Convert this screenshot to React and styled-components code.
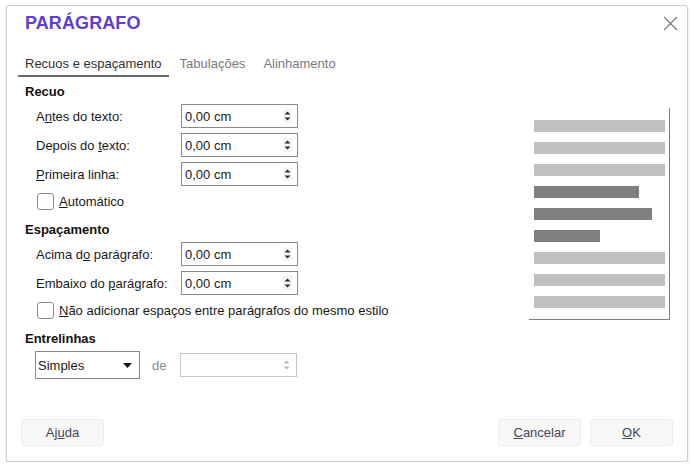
import React from "react";
import styled, { createGlobalStyle } from "styled-components";

const Global = createGlobalStyle`
  html, body { margin: 0; padding: 0; background: #ffffff; }
  body { font-family: "Liberation Sans", Arial, sans-serif; font-size: 13px; color: #1a1a1a; }
  * { box-sizing: border-box; }
`;

const Dialog = styled.div`
  margin: 5px 0 0 6px;
  width: 682px;
  height: 457px;
  border: 1px solid #cfcfd4;
  border-radius: 3px;
  box-shadow: 0 1px 2px rgba(0, 0, 0, 0.18);
  display: flex;
  flex-direction: column;
  position: relative;
  background: #fff;
`;

const Header = styled.div`
  display: flex;
  justify-content: space-between;
  align-items: center;
  padding: 3px 8px 0 18px;
  height: 31px;
`;

const Title = styled.h1`
  margin: 0;
  font-size: 18px;
  font-weight: bold;
  color: #5d3fd3;
  letter-spacing: 0.1px;
`;

const CloseBtn = styled.button`
  width: 18px;
  height: 18px;
  padding: 0;
  border: none;
  background: none;
  display: flex;
  align-items: center;
  justify-content: center;
`;

const Tabs = styled.div`
  display: flex;
  gap: 4px;
  margin: 16px 0 0 11px;
`;

const Tab = styled.div`
  padding: 3px 7px 4px;
  font-size: 13px;
  color: ${(p) => (p.$active ? "#333" : "#7a7a7a")};
  border-bottom: 2px solid ${(p) => (p.$active ? "#6b6b6b" : "transparent")};
`;

const Body = styled.div`
  display: flex;
  flex: 1;
  padding: 0 17px 0 18px;
`;

const Form = styled.div`
  flex: 1;
  display: flex;
  flex-direction: column;
`;

const SectionTitle = styled.div`
  font-weight: bold;
  font-size: 13px;
  color: #111;
  height: 18px;
  line-height: 18px;
  margin-top: ${(p) => p.$top}px;
`;

const Row = styled.div`
  display: flex;
  align-items: center;
  margin-top: ${(p) => p.$top}px;
  padding-left: ${(p) => p.$indent}px;
`;

const Label = styled.label`
  width: 145px;
  font-size: 13px;
  color: #1a1a1a;
`;

const U = styled.span`
  text-decoration: underline;
  text-underline-offset: 1px;
`;

const Spin = styled.div`
  width: 117px;
  height: 24px;
  border: 1px solid ${(p) => (p.$disabled ? "#c6c6c6" : "#8a8a8a")};
  display: flex;
  align-items: center;
  justify-content: space-between;
  padding: 0 5px 0 3px;
  font-size: 13px;
  color: #1a1a1a;
  background: #fff;
`;

const SpinArrows = styled.div`
  width: 9px;
  height: 14px;
  display: flex;
  align-items: center;
  justify-content: center;
  background: ${(p) => (p.$disabled ? "transparent" : "#f4f4f4")};
`;

const Check = styled.span`
  width: 17px;
  height: 17px;
  border: 1px solid #8a8a8a;
  border-radius: 3px;
  background: #fff;
  margin-right: 5px;
  flex: none;
`;

const CheckText = styled.span`
  font-size: 13px;
  color: #1a1a1a;
`;

const Select = styled.div`
  width: 105px;
  height: 28px;
  border: 1px solid #8a8a8a;
  display: flex;
  align-items: center;
  justify-content: space-between;
  padding: 0 7px 0 2px;
  font-size: 13px;
  color: #1a1a1a;
`;

const De = styled.span`
  width: 40px;
  padding-left: 12px;
  color: #8a8a8a;
  font-size: 13px;
`;

const Preview = styled.div`
  width: 141px;
  height: 212px;
  margin-top: 31px;
  border-right: 1px solid #808080;
  border-bottom: 1px solid #808080;
  padding: 12px 0 0 5px;
  display: flex;
  flex-direction: column;
  gap: 10px;
`;

const Bar = styled.div`
  height: 12px;
  background: ${(p) => (p.$dark ? "#808080" : "#c0c0c0")};
`;

const Footer = styled.div`
  display: flex;
  align-items: center;
  padding: 0 14px 15px 14px;
  gap: 9px;
`;

const Spacer = styled.div`
  flex: 1;
`;

const Button = styled.button`
  width: 83px;
  height: 27px;
  border: 1px solid #ececee;
  border-radius: 3px;
  background: #f8f8f9;
  font-family: "Liberation Sans", Arial, sans-serif;
  font-size: 13px;
  color: #454555;
  padding: 0;
`;

const ArrowsIcon = ({ color }) => (
  <svg width="7" height="10" viewBox="0 0 7 10">
    <path d="M0.5 3.5 L3.5 0.5 L6.5 3.5 Z" fill={color} />
    <path d="M0.5 6.5 L3.5 9.5 L6.5 6.5 Z" fill={color} />
  </svg>
);

const SpinBox = ({ disabled, value }) => (
  <Spin $disabled={disabled}>
    <span>{value}</span>
    <SpinArrows $disabled={disabled}>
      <ArrowsIcon color={disabled ? "#b8b8b8" : "#2a2a2a"} />
    </SpinArrows>
  </Spin>
);

const bars = [
  { w: 131 }, { w: 131 }, { w: 131 },
  { w: 105, dark: true }, { w: 118, dark: true }, { w: 66, dark: true },
  { w: 131 }, { w: 131 }, { w: 131 },
];

export default function App() {
  return (
    <>
      <Global />
      <Dialog>
        <Header>
          <Title>PARÁGRAFO</Title>
          <CloseBtn aria-label="Fechar">
            <svg width="15" height="15" viewBox="0 0 15 15">
              <path d="M1 1 L14 14 M14 1 L1 14" stroke="#7a7a7a" strokeWidth="1.2" />
            </svg>
          </CloseBtn>
        </Header>
        <Tabs>
          <Tab $active>Recuos e espaçamento</Tab>
          <Tab>Tabulações</Tab>
          <Tab>Alinhamento</Tab>
        </Tabs>
        <Body>
          <Form>
            <SectionTitle $top={6}>Recuo</SectionTitle>
            <Row $top={3} $indent={11}>
              <Label>A<U>n</U>tes do texto:</Label>
              <SpinBox value="0,00 cm" />
            </Row>
            <Row $top={5} $indent={11}>
              <Label>Depois do <U>t</U>exto:</Label>
              <SpinBox value="0,00 cm" />
            </Row>
            <Row $top={5} $indent={11}>
              <Label><U>P</U>rimeira linha:</Label>
              <SpinBox value="0,00 cm" />
            </Row>
            <Row $top={7} $indent={12}>
              <Check />
              <CheckText><U>A</U>utomático</CheckText>
            </Row>
            <SectionTitle $top={11}>Espaçamento</SectionTitle>
            <Row $top={3} $indent={11}>
              <Label>Acima d<U>o</U> parágrafo:</Label>
              <SpinBox value="0,00 cm" />
            </Row>
            <Row $top={5} $indent={11}>
              <Label>Embaixo do <U>p</U>arágrafo:</Label>
              <SpinBox value="0,00 cm" />
            </Row>
            <Row $top={7} $indent={12}>
              <Check />
              <CheckText><U>N</U>ão adicionar espaços entre parágrafos do mesmo estilo</CheckText>
            </Row>
            <SectionTitle $top={11}>Entrelinhas</SectionTitle>
            <Row $top={3} $indent={10}>
              <Select>
                <span>Simples</span>
                <svg width="9" height="5" viewBox="0 0 9 5">
                  <path d="M0 0 L9 0 L4.5 5 Z" fill="#111" />
                </svg>
              </Select>
              <De>de</De>
              <SpinBox disabled value="" />
            </Row>
          </Form>
          <Preview>
            {bars.map((b, i) => (
              <Bar key={i} $dark={b.dark} style={{ width: b.w }} />
            ))}
          </Preview>
        </Body>
        <Footer>
          <Button>Aj<U>u</U>da</Button>
          <Spacer />
          <Button><U>C</U>ancelar</Button>
          <Button><U>O</U>K</Button>
        </Footer>
      </Dialog>
    </>
  );
}
